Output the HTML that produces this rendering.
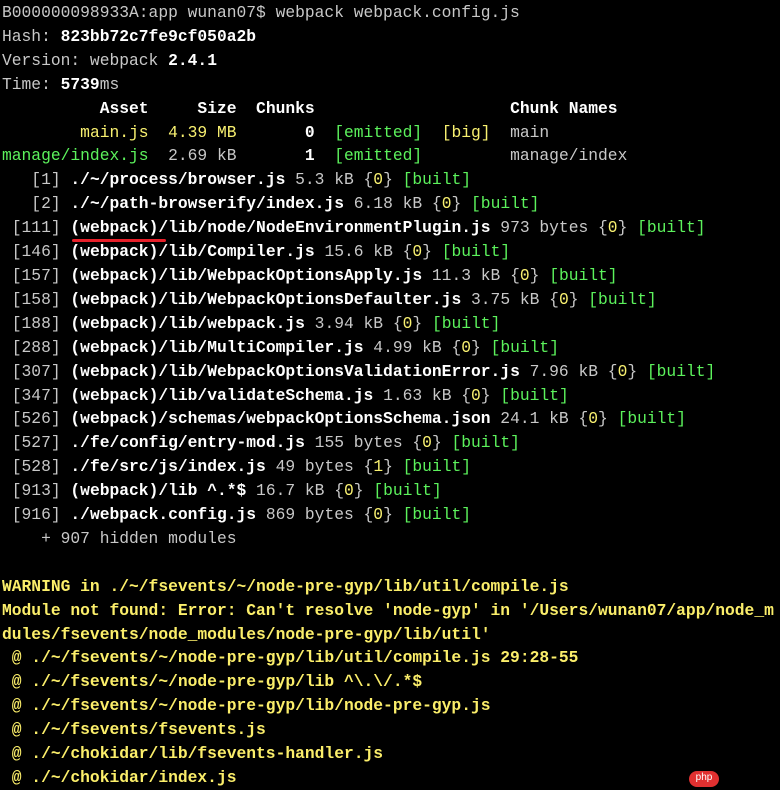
<!DOCTYPE html>
<html><head><meta charset="utf-8"><style>
html,body{margin:0;padding:0;background:#000;width:780px;height:780px;overflow:hidden}
pre{margin:0;position:absolute;left:2px;top:1px;font-family:"Liberation Mono","DejaVu Sans Mono",monospace;font-size:16.3px;line-height:23.9px;color:#c8c8c8;white-space:pre}
b{color:#fff;font-weight:bold}
.y{color:#f8f070}
.g{color:#5cf25c}
.w{color:#fbee6a}
.u{position:absolute;left:72px;top:239px;width:94px;height:3px;background:#e8202a;border-radius:2px}
.php{position:absolute;left:689px;top:771px;width:30px;height:16px;border-radius:8px;background:#e03030;color:#fff;font:10px "Liberation Sans",sans-serif;text-align:center;line-height:14px}
</style></head><body>
<pre>B000000098933A:app wunan07$ webpack webpack.config.js
Hash: <b>823bb72c7fe9cf050a2b</b>
Version: webpack <b>2.4.1</b>
Time: <b>5739</b>ms
          <b>Asset     Size  Chunks                    Chunk Names</b>
        <span class="y">main.js  4.39 MB</span>       <b>0</b>  <span class="g">[emitted]</span>  <span class="y">[big]</span>  main
<span class="g">manage/index.js</span>  2.69 kB       <b>1</b>  <span class="g">[emitted]</span>         manage/index
   [1] <b>./~/process/browser.js</b> 5.3 kB {<span class="y">0</span>} <span class="g">[built]</span>
   [2] <b>./~/path-browserify/index.js</b> 6.18 kB {<span class="y">0</span>} <span class="g">[built]</span>
 [111] <b>(webpack)/lib/node/NodeEnvironmentPlugin.js</b> 973 bytes {<span class="y">0</span>} <span class="g">[built]</span>
 [146] <b>(webpack)/lib/Compiler.js</b> 15.6 kB {<span class="y">0</span>} <span class="g">[built]</span>
 [157] <b>(webpack)/lib/WebpackOptionsApply.js</b> 11.3 kB {<span class="y">0</span>} <span class="g">[built]</span>
 [158] <b>(webpack)/lib/WebpackOptionsDefaulter.js</b> 3.75 kB {<span class="y">0</span>} <span class="g">[built]</span>
 [188] <b>(webpack)/lib/webpack.js</b> 3.94 kB {<span class="y">0</span>} <span class="g">[built]</span>
 [288] <b>(webpack)/lib/MultiCompiler.js</b> 4.99 kB {<span class="y">0</span>} <span class="g">[built]</span>
 [307] <b>(webpack)/lib/WebpackOptionsValidationError.js</b> 7.96 kB {<span class="y">0</span>} <span class="g">[built]</span>
 [347] <b>(webpack)/lib/validateSchema.js</b> 1.63 kB {<span class="y">0</span>} <span class="g">[built]</span>
 [526] <b>(webpack)/schemas/webpackOptionsSchema.json</b> 24.1 kB {<span class="y">0</span>} <span class="g">[built]</span>
 [527] <b>./fe/config/entry-mod.js</b> 155 bytes {<span class="y">0</span>} <span class="g">[built]</span>
 [528] <b>./fe/src/js/index.js</b> 49 bytes {<span class="y">1</span>} <span class="g">[built]</span>
 [913] <b>(webpack)/lib ^.*$</b> 16.7 kB {<span class="y">0</span>} <span class="g">[built]</span>
 [916] <b>./webpack.config.js</b> 869 bytes {<span class="y">0</span>} <span class="g">[built]</span>
    + 907 hidden modules

<span class="w"><b style="color:#fbee6a">WARNING in ./~/fsevents/~/node-pre-gyp/lib/util/compile.js</b>
<b style="color:#fbee6a">Module not found: Error: Can't resolve 'node-gyp' in '/Users/wunan07/app/node_m</b>
<b style="color:#fbee6a">dules/fsevents/node_modules/node-pre-gyp/lib/util'</b>
<b style="color:#fbee6a"> @ ./~/fsevents/~/node-pre-gyp/lib/util/compile.js 29:28-55</b>
<b style="color:#fbee6a"> @ ./~/fsevents/~/node-pre-gyp/lib ^\.\/.*$</b>
<b style="color:#fbee6a"> @ ./~/fsevents/~/node-pre-gyp/lib/node-pre-gyp.js</b>
<b style="color:#fbee6a"> @ ./~/fsevents/fsevents.js</b>
<b style="color:#fbee6a"> @ ./~/chokidar/lib/fsevents-handler.js</b>
<b style="color:#fbee6a"> @ ./~/chokidar/index.js</b></span></pre>
<div class="u"></div>
<div class="php">php</div>
</body></html>
